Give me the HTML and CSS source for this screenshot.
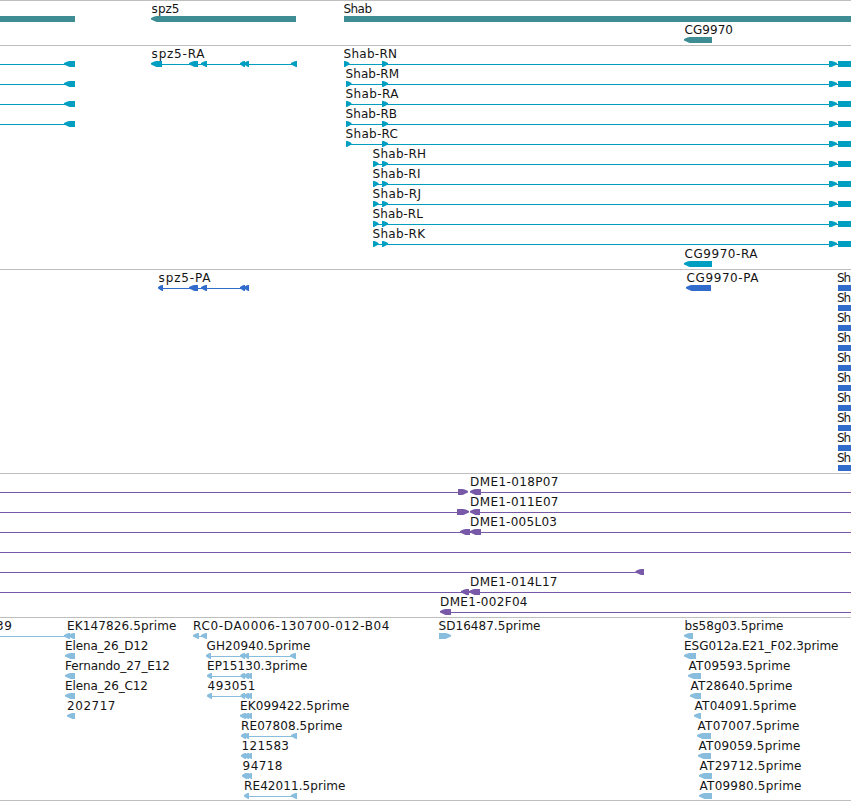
FILE: index.html
```html
<!DOCTYPE html>
<html lang="en">
<head>
<meta charset="utf-8">
<title>Genome tracks</title>
<link rel="stylesheet" href="styles.css">
</head>
<body>
<main id="tracks" class="tracks"></main>
<script src="tracks.js"></script>
</body>
</html>
```
FILE: styles.css
```css
body {
  margin: 0;
  background: #fff;
}

.tracks {
  display: flex;
  flex-direction: column;
  width: 851px;
  border-bottom: 1px solid #bebebe;
}

.track {
  border-top: 1px solid #bebebe;
  overflow: hidden;
}

.track svg {
  display: block;
}

.track text {
  font-family: "DejaVu Sans", sans-serif;
  font-size: 12px;
  fill: #141414;
}

.gene { fill: #3e8d94; }
.transcript { fill: #009fc1; }
.protein { fill: #316ccd; }
.clone { fill: #7859a7; }
.est { fill: #88bdde; }
```
FILE: tracks.js
```js
// Row: { t: [text, start, end], line: [[start, end]], f: [[start, end, direction]] }
// direction: "l" points left, "r" points right, "b" is a plain block.
const WIDTH = 851;

const longRow = (name, x, end, first) => ({
  t: [name, x, end],
  line: [[first, WIDTH]],
  f: [[first, first + 5.5, "r"], [382, 388, "r"], [829, 837, "r"], [838, WIDTH, "b"]]
});
const upstream = { line: [[0, 65]], f: [[64, 75, "l"]] };
const merge = (a, b) => ({ t: b.t, line: a.line.concat(b.line), f: a.f.concat(b.f) });

const first = merge(upstream, longRow("Shab-RN", 343, 397, 344));

const tracks = [
  { kind: "gene", height: 45, step: 21, rows: [
    { t: ["spz5", 151, 179.5], f: [[0, 75, "b"], [151, 296, "l"], [344, WIDTH, "b"]], extra: ["Shab", 343, 372] },
    { t: ["CG9970", 684, 733], f: [[684, 712, "l"]] }
  ]},
  { kind: "transcript", height: 224, step: 20, rows: [
    {
      t: ["spz5-RA", 151, 204.5],
      extra: first.t,
      line: first.line.concat([[155, 296]]),
      f: first.f.concat([[151, 162, "l"], [189, 198, "l"], [201, 207, "l"], [240, 245, "l"], [244, 249, "l"], [291, 297, "l"]])
    },
    merge(upstream, longRow("Shab-RM", 345, 399, 346)),
    merge(upstream, longRow("Shab-RA", 345, 398.5, 346)),
    merge(upstream, longRow("Shab-RB", 345, 397, 346)),
    longRow("Shab-RC", 345, 398, 346),
    longRow("Shab-RH", 372, 426, 373),
    longRow("Shab-RI", 372, 420.5, 373),
    longRow("Shab-RJ", 372, 421, 373),
    longRow("Shab-RL", 372, 423, 373),
    longRow("Shab-RK", 372, 425, 373),
    { t: ["CG9970-RA", 684, 757.5], f: [[684, 712, "l"]] }
  ]},
  { kind: "protein", height: 204, step: 20, rows: [
    { t: ["spz5-PA", 158, 210.5], line: [[160, 248]],
      f: [[158, 163, "l"], [189, 198, "l"], [201, 207, "l"], [240, 245, "l"], [244, 249, "l"],
          [686, 711, "l"], [838, WIDTH, "b"]],
      extra: ["CG9970-PA", 686, 758.5], edge: true }
  ].concat(Array.from({ length: 9 }, () => ({ f: [[838, WIDTH, "b"]], edge: true }))) },
  { kind: "clone", height: 144, step: 20, rows: [
    { t: ["DME1-018P07", 469.5, 558.5], line: [[0, 467], [471, WIDTH]], f: [[458, 468, "r"], [470, 481, "l"]] },
    { t: ["DME1-011E07", 469.5, 558.5], line: [[0, 468], [471, WIDTH]], f: [[457, 469, "r"], [470, 480, "l"]] },
    { t: ["DME1-005L03", 469.5, 557], line: [[0, WIDTH]], f: [[460, 470, "l"], [470, 481, "l"]] },
    { line: [[0, WIDTH]], f: [] },
    { line: [[0, 640]], f: [[635.5, 644, "l"]] },
    { t: ["DME1-014L17", 469.5, 557.5], line: [[0, WIDTH]], f: [[461, 469, "l"], [469, 480, "l"]] },
    { t: ["DME1-002F04", 439.5, 527.5], line: [[441, WIDTH]], f: [[440, 451, "l"]] }
  ]},
  { kind: "est", height: 183, step: 20, more: [
    ["39", -4.5, 12, 0], ["EK147826.5prime", 66.5, 176.5, 0], ["Elena_26_D12", 64.5, 148.5, 1],
    ["Fernando_27_E12", 64.5, 170, 2], ["Elena_26_C12", 64.5, 148, 3], ["202717", 66.5, 115.5, 4],
    ["SD16487.5prime", 438, 540.5, 0], ["bs58g03.5prime", 684, 783.5, 0],
    ["ESG012a.E21_F02.3prime", 683.5, 838.5, 1], ["AT09593.5prime", 688, 790.5, 2],
    ["AT28640.5prime", 690, 792.5, 3], ["AT04091.5prime", 694, 796.5, 4],
    ["AT07007.5prime", 697, 799.5, 5], ["AT09059.5prime", 698, 800.5, 6],
    ["AT29712.5prime", 699, 801.5, 7], ["AT09980.5prime", 699, 801.5, 8]
  ], rows: [
    { t: ["RC0-DA0006-130700-012-B04", 192.5, 389.5], line: [[0, 66], [196, 205]],
      f: [[64, 70, "l"], [68, 75, "l"], [193, 199, "l"], [201, 207, "l"], [439, 451, "r"], [684, 693, "l"]] },
    { t: ["GH20940.5prime", 206, 310.5], line: [[208, 295]],
      f: [[65, 75, "l"], [206, 211, "l"], [240, 245, "l"], [244, 249, "l"], [290, 296, "l"], [684, 696, "l"]] },
    { t: ["EP15130.3prime", 206.5, 307.5], line: [[208, 250]],
      f: [[65, 75, "l"], [207, 212, "l"], [240.5, 245, "l"], [244, 249, "l"], [247, 252, "l"], [688, 701, "l"]] },
    { t: ["493051", 207, 255.5], line: [[208, 250]],
      f: [[65, 75, "l"], [207, 212, "l"], [240.5, 245, "l"], [244, 249, "l"], [247, 252, "l"], [690, 701, "l"]] },
    { t: ["EK099422.5prime", 239.5, 349.5], f: [[67, 75, "l"], [240, 246, "l"], [244, 249, "l"], [247, 252, "l"], [694, 701, "l"]] },
    { t: ["RE07808.5prime", 240.5, 342.5], line: [[244, 296]],
      f: [[241, 246, "l"], [244, 249, "l"], [291, 297, "l"], [697, 711, "l"]] },
    { t: ["121583", 241, 289], f: [[241, 246, "l"], [244, 249, "l"], [247, 252, "l"], [698, 711, "l"]] },
    { t: ["94718", 242, 282.5], f: [[242, 247, "l"], [244, 249, "l"], [247, 252, "l"], [699, 712, "l"]] },
    { t: ["RE42011.5prime", 243.5, 345.5], line: [[246, 296]],
      f: [[244, 249, "l"], [291, 297, "l"], [699, 712, "l"]] }
  ]}
];

function shape([a, b, dir], y) {
  if (dir === "b") return `<rect x="${a}" y="${y}" width="${b - a}" height="6"/>`;
  const s = dir === "l" ? 1 : -1;
  const tip = s === 1 ? a : b;
  const back = s === 1 ? b : a;
  const head = Math.min(5.5, b - a - 1) * s;
  return `<path d="M${tip} ${y + 2}L${tip + head * 0.6} ${y + 0.6}L${tip + head} ${y}H${back}V${y + 6}H${tip + head}L${tip + head * 0.6} ${y + 5}L${tip} ${y + 3.5}Z"/>`;
}

function label([text, start, end], y) {
  const x = start + 0.6;
  return `<text x="${x}" y="${y}" textLength="${(end - x).toFixed(2)}" lengthAdjust="spacing">${text}</text>`;
}

document.getElementById("tracks").innerHTML = tracks.map(track => {
  let marks = "";
  let labels = "";
  track.rows.forEach((row, i) => {
    // The one-pixel top border sits above the drawing area.
    const y = 15 + i * track.step;
    (row.line || []).forEach(([a, b]) => {
      marks += `<rect x="${a}" y="${y + 3}" width="${b - a}" height="1"/>`;
    });
    row.f.forEach(f => { marks += shape(f, y); });
    if (row.t) labels += label(row.t, y - 3);
    if (row.extra) labels += label(row.extra, y - 3);
    if (row.edge) labels += `<text x="837" y="${y - 3}" textLength="14" lengthAdjust="spacing">Sh</text>`;
  });
  (track.more || []).forEach(m => { labels += label(m, 12 + m[3] * track.step); });
  return `<section class="track"><svg width="${WIDTH}" height="${track.height - 1}"><g class="${track.kind}">${marks}</g>${labels}</svg></section>`;
}).join("");
```
